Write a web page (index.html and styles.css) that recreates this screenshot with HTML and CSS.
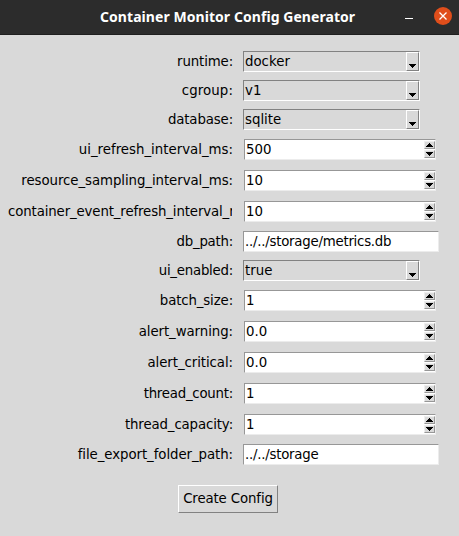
FILE: index.html
```html
<!DOCTYPE html>
<html lang="en">
<head>
<meta charset="utf-8">
<title>Container Monitor Config Generator</title>
<link rel="stylesheet" href="styles.css">
</head>
<body>
<svg width="0" height="0" class="defs">
  <symbol id="down" viewBox="0 0 7 4"><path d="M0 0h7v1h-1v1h-1v1h-1v1h-1v-1h-1v-1h-1v-1h-1z"/></symbol>
  <symbol id="up" viewBox="0 0 7 4"><path d="M0 4h7v-1h-1v-1h-1v-1h-1v-1h-1v1h-1v1h-1v1h-1z"/></symbol>
</svg>
<header class="titlebar">
  <h1><span>Container Monitor Config Generator</span></h1>
  <span class="minimize"></span>
  <span class="close"><svg width="8" height="8" viewBox="0 0 8 8"><path d="M.5 .5l7 7M7.5 .5l-7 7"/></svg></span>
</header>
<main class="form">
  <div class="row"><label class="snug">runtime:</label><div class="combo"><span>docker</span><i><svg><use href="#down"/></svg></i></div></div>
  <div class="row"><label class="loose">cgroup:</label><div class="combo"><span>v1</span><i><svg><use href="#down"/></svg></i></div></div>
  <div class="row"><label class="snug">database:</label><div class="combo"><span>sqlite</span><i><svg><use href="#down"/></svg></i></div></div>
  <div class="row tall"><label>ui_refresh_interval_ms:</label><div class="spin"><span>500</span><div class="steps"><i><svg><use href="#up"/></svg></i><i><svg><use href="#down"/></svg></i></div></div></div>
  <div class="row tall"><label class="near">resource_sampling_interval_ms:</label><div class="spin"><span>10</span><div class="steps"><i><svg><use href="#up"/></svg></i><i><svg><use href="#down"/></svg></i></div></div></div>
  <div class="row tall"><label class="snug clipped">container_event_refresh_interval_ms:</label><div class="spin"><span>10</span><div class="steps"><i><svg><use href="#up"/></svg></i><i><svg><use href="#down"/></svg></i></div></div></div>
  <div class="row"><label class="tight">db_path:</label><div class="entry"><span>../../storage/metrics.db</span></div></div>
  <div class="row"><label class="tight">ui_enabled:</label><div class="combo"><span>true</span><i><svg><use href="#down"/></svg></i></div></div>
  <div class="row tall"><label class="snug">batch_size:</label><div class="spin"><span>1</span><div class="steps"><i><svg><use href="#up"/></svg></i><i><svg><use href="#down"/></svg></i></div></div></div>
  <div class="row tall"><label class="near">alert_warning:</label><div class="spin"><span>0.0</span><div class="steps"><i><svg><use href="#up"/></svg></i><i><svg><use href="#down"/></svg></i></div></div></div>
  <div class="row tall"><label class="near">alert_critical:</label><div class="spin"><span>0.0</span><div class="steps"><i><svg><use href="#up"/></svg></i><i><svg><use href="#down"/></svg></i></div></div></div>
  <div class="row tall"><label class="tight">thread_count:</label><div class="spin"><span>1</span><div class="steps"><i><svg><use href="#up"/></svg></i><i><svg><use href="#down"/></svg></i></div></div></div>
  <div class="row tall"><label class="snug">thread_capacity:</label><div class="spin"><span>1</span><div class="steps"><i><svg><use href="#up"/></svg></i><i><svg><use href="#down"/></svg></i></div></div></div>
  <div class="row"><label class="near">file_export_folder_path:</label><div class="entry"><span>../../storage</span></div></div>
  <button class="create">Create Config</button>
</main>
</body>
</html>
```
FILE: styles.css
```css
* { box-sizing: border-box; }
body {
  margin: 0;
  height: 536px;
  overflow: hidden;
  background: #d9d9d9;
  color: #000;
  font: 13.33px/19px "DejaVu Sans", sans-serif;
}
.defs { display: block; }
.titlebar {
  display: flex;
  align-items: center;
  height: 35px;
  background: #2c2c2c;
  border-bottom: 1px solid #1f1f1f;
}
h1 {
  margin: 0;
  padding-left: 100px;
  width: 405px;
  font: bold 14px/34px "Noto Sans", sans-serif;
  letter-spacing: .06px;
  color: #fff;
  white-space: nowrap;
}
.minimize { width: 8px; height: 1px; margin-top: 3px; background: #fff; }
.close {
  display: flex;
  align-items: center;
  justify-content: center;
  width: 18px;
  height: 18px;
  margin: -2px 0 0 21px;
  border-radius: 50%;
  background: #e04e1b;
}
.close path { stroke: #fff; stroke-width: 1.3; fill: none; }
.form { padding-top: 12px; }
.row { display: flex; align-items: center; height: 29px; }
.row.tall { height: 31px; }
label {
  flex: none;
  width: 225px;
  margin: 0 10px 0 8px;
  display: flex;
  justify-content: safe flex-end;
  overflow: hidden;
  white-space: nowrap;
}
.loose { letter-spacing: .1px; }
.near { letter-spacing: -.07px; }
.snug { letter-spacing: -.13px; }
.tight { letter-spacing: -.24px; }
.clipped { width: 224px; margin-right: 11px; }
.row span { white-space: nowrap; }
.combo, .spin, .entry {
  display: flex;
  justify-content: space-between;
  height: 21px;
  border: 1px solid;
}
.combo { width: 177px; border-color: #828282 #fff #fff #828282; padding-left: 1px; }
.spin { width: 192px; margin-left: 1px; background: #fff; border-color: #979797 #ececec #ececec #979797; padding-left: 1px; }
.entry { width: 196px; background: #fff; border-color: #979797 #ececec #ececec #979797; padding-left: 1px; letter-spacing: -.24px; }
.row i {
  display: flex;
  justify-content: center;
  background: #d9d9d9;
  border: 1px solid;
  border-color: #fff #828282 #828282 #fff;
}
.row i svg { width: 7px; height: 4px; shape-rendering: crispEdges; }
.combo i { width: 13px; padding-top: 11px; }
.steps { width: 11px; padding: 1px 0; }
.steps i { width: 11px; height: 8px; align-items: center; margin-bottom: 1px; border-color: #eee #979797 #979797 #eee; }
.create {
  display: block;
  width: 100px;
  height: 28px;
  margin: 16px 0 0 178px;
  padding: 0 0 2px;
  font: inherit;
  letter-spacing: -.12px;
  color: #000;
  background: #d9d9d9;
  border: 1px solid;
  border-color: #fff #828282 #828282 #fff;
}
```
